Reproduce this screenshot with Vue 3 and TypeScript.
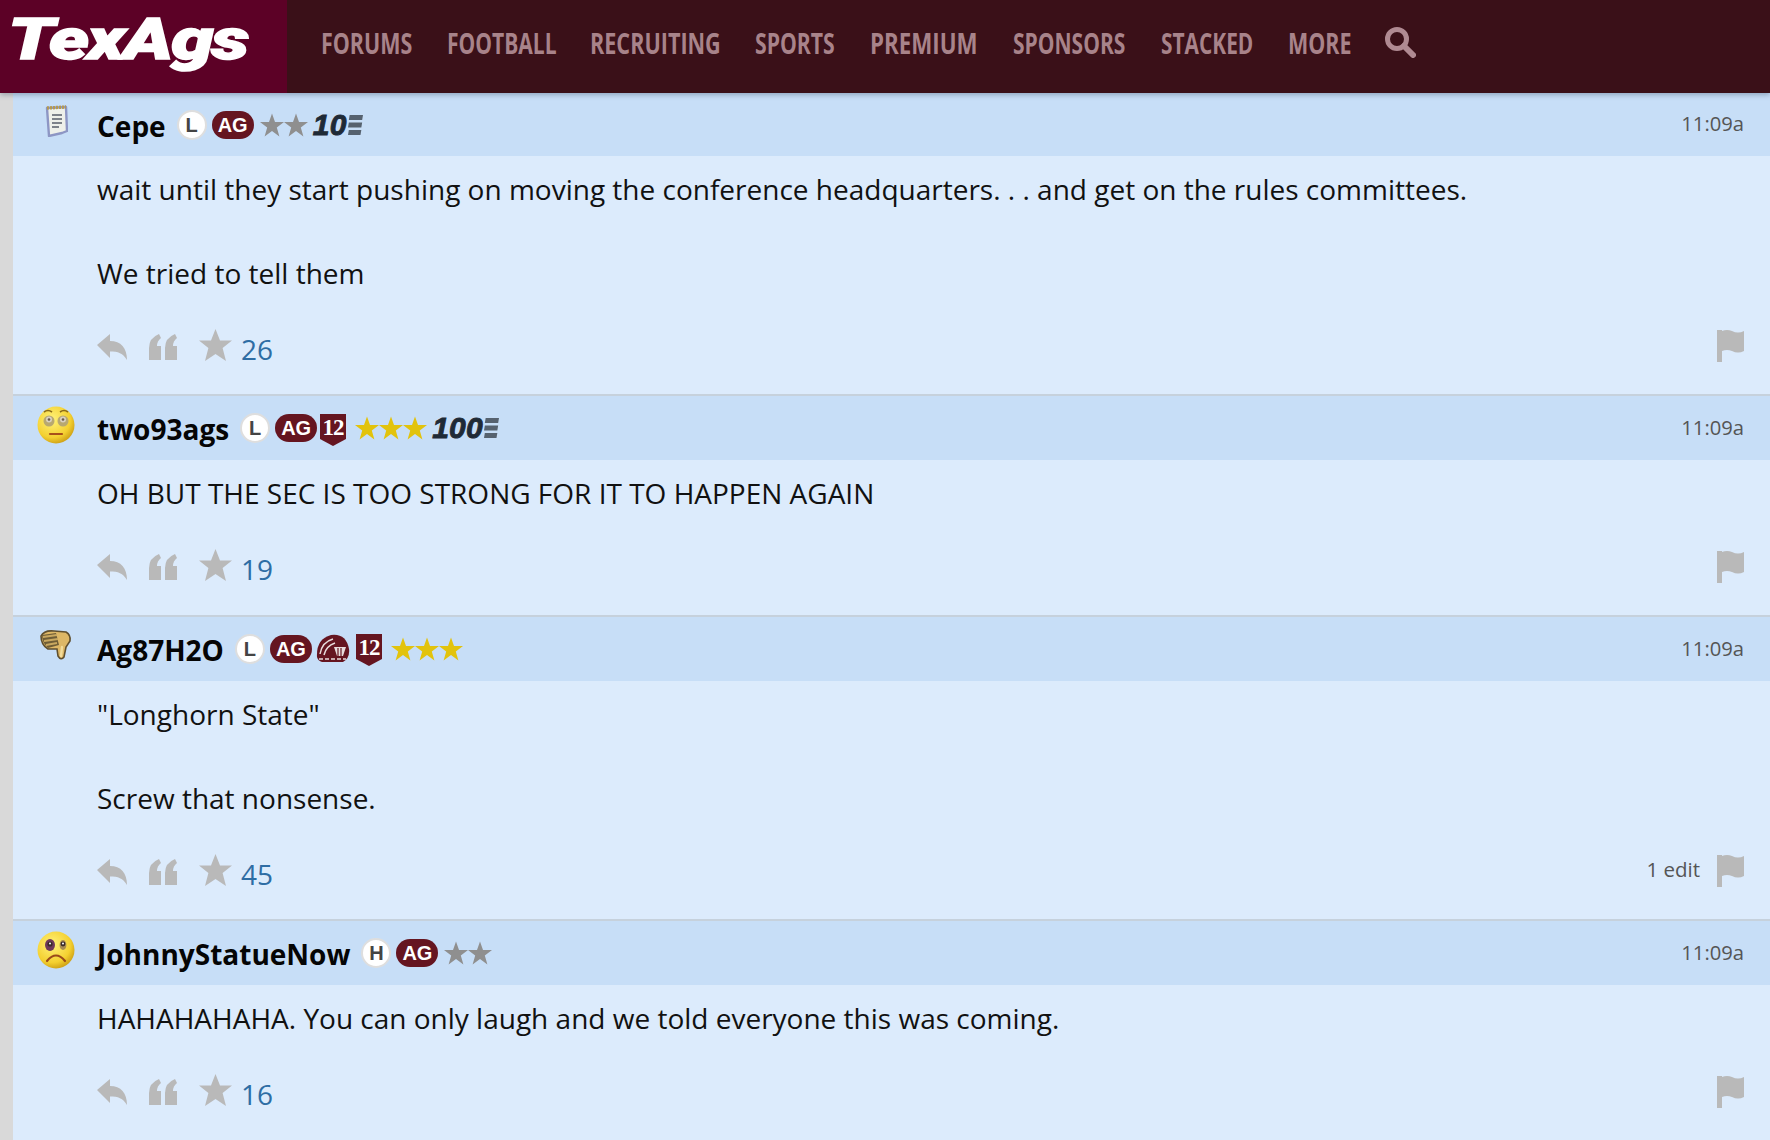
<script setup lang="ts">
interface Post {
  id: number
  avatar: 'note' | 'roll' | 'thumb' | 'sad'
  name: string
  level: string
  stars: number
  starColor: string
  tier: string
  shield: boolean
  helmet: boolean
  lines: string[]
  count: number
  edit: string
}
const nav = [
  { label: 'FORUMS', w: 92, sx: 0.74 },
  { label: 'FOOTBALL', w: 109, sx: 0.725 },
  { label: 'RECRUITING', w: 131, sx: 0.745 },
  { label: 'SPORTS', w: 81, sx: 0.73 },
  { label: 'PREMIUM', w: 109, sx: 0.77 },
  { label: 'SPONSORS', w: 114, sx: 0.725 },
  { label: 'STACKED', w: 93, sx: 0.72 },
  { label: 'MORE', w: 63, sx: 0.74 },
]
const posts: Post[] = [
  { id: 1, avatar: 'note', name: 'Cepe', level: 'L', stars: 2, starColor: '#8f8f8f', tier: '10', shield: false, helmet: false,
    lines: ['wait until they start pushing on moving the conference headquarters. . . and get on the rules committees.', '', 'We tried to tell them'], count: 26, edit: '' },
  { id: 2, avatar: 'roll', name: 'two93ags', level: 'L', stars: 3, starColor: '#e2c30c', tier: '100', shield: true, helmet: false,
    lines: ['OH BUT THE SEC IS TOO STRONG FOR IT TO HAPPEN AGAIN'], count: 19, edit: '' },
  { id: 3, avatar: 'thumb', name: 'Ag87H2O', level: 'L', stars: 3, starColor: '#e2c30c', tier: '', shield: true, helmet: true,
    lines: ['"Longhorn State"', '', 'Screw that nonsense.'], count: 45, edit: '1 edit' },
  { id: 4, avatar: 'sad', name: 'JohnnyStatueNow', level: 'H', stars: 2, starColor: '#8f8f8f', tier: '', shield: false, helmet: false,
    lines: ['HAHAHAHAHA. You can only laugh and we told everyone this was coming.'], count: 16, edit: '' },
]
</script>

<template>
  <div class="page">
    <header class="top">
      <div class="logo"><span class="logo-text">TexAgs</span></div>
      <nav class="nav">
        <a v-for="item in nav" :key="item.label" class="nav-item" :style="{ width: item.w + 'px' }"><span :style="{ transform: `scaleX(${item.sx})` }">{{ item.label }}</span></a>
        <svg class="search" viewBox="0 0 32 32" width="32" height="32">
          <circle cx="13" cy="13" r="9.5" fill="none" stroke="#b08a92" stroke-width="5" />
          <path d="M20 20 L29 29" stroke="#b08a92" stroke-width="6" stroke-linecap="round" />
        </svg>
      </nav>
    </header>

    <main class="list">
      <article v-for="post in posts" :key="post.id" class="post">
        <div class="head">
          <div class="avatar">
            <svg v-if="post.avatar === 'note'" viewBox="0 0 24 32" width="24" height="32">
              <path d="M3 3 L22 2 L23 26 L18 28 L5 31 Z" fill="#eef0ea" stroke="#8d96c4" stroke-width="2.4" stroke-linejoin="round" />
              <path d="M3 3 L22 2" stroke="#b59a50" stroke-width="3.4" stroke-dasharray="2 1" />
              <path d="M8 10 H18 M8 14 H18 M8 18 H18 M8 22 H15" stroke="#7d828a" stroke-width="2.2" />
            </svg>
            <svg v-else-if="post.avatar === 'roll'" viewBox="0 0 38 38" width="38" height="38">
              <defs><radialGradient id="f1" cx=".4" cy=".35" r=".7"><stop offset="0" stop-color="#fff27a" /><stop offset=".7" stop-color="#f4d030" /><stop offset="1" stop-color="#c99a12" /></radialGradient></defs>
              <circle cx="19" cy="19" r="18.5" fill="url(#f1)" />
              <path d="M7 6 Q11 3 15 6 M23 6 Q27 3 31 6" stroke="#8a6a1a" stroke-width="1.6" fill="none" />
              <ellipse cx="12" cy="15" rx="5.5" ry="5.5" fill="#b8a870" />
              <ellipse cx="26" cy="15" rx="5.5" ry="5.5" fill="#b8a870" />
              <circle cx="12" cy="13.5" r="3" fill="#d8d0c0" />
              <circle cx="26" cy="13.5" r="3" fill="#d8d0c0" />
              <circle cx="12" cy="13.5" r="1.3" fill="#6a5a4a" />
              <circle cx="26" cy="13.5" r="1.3" fill="#6a5a4a" />
              <path d="M13 28 H25" stroke="#a8501a" stroke-width="2.2" stroke-linecap="round" />
            </svg>
            <svg v-else-if="post.avatar === 'thumb'" viewBox="0 0 32 32" width="32" height="32">
              <path d="M1 7 Q4 1 14 2 L26 3 Q31 6 30 12 L26 18 L24 28 Q21 32 18 27 L17 20 L8 20 Q1 16 1 7 Z" fill="#ddb766" stroke="#5f4f2f" stroke-width="1.6" />
              <path d="M2 6 L16 4 L19 16 L8 19 Q2 14 2 6 Z" fill="#6f5d36" />
              <path d="M3 8 L17 6 M4 12 L18 10 M6 16 L17 14" stroke="#c9a860" stroke-width="1.8" />
              <path d="M22 18 L21 27" stroke="#f3dc9a" stroke-width="2.4" stroke-linecap="round" />
            </svg>
            <svg v-else viewBox="0 0 38 38" width="38" height="38">
              <defs><radialGradient id="f2" cx=".4" cy=".35" r=".7"><stop offset="0" stop-color="#fff27a" /><stop offset=".7" stop-color="#f4d030" /><stop offset="1" stop-color="#c99a12" /></radialGradient></defs>
              <circle cx="19" cy="19" r="18.5" fill="url(#f2)" />
              <ellipse cx="13" cy="14" rx="5" ry="6" fill="#6e3a5a" />
              <circle cx="13" cy="13" r="2.6" fill="#3a2a2a" />
              <circle cx="13" cy="12.4" r="1" fill="#fff" />
              <ellipse cx="26" cy="14" rx="3.4" ry="5" fill="#a88a50" />
              <circle cx="26" cy="13" r="2.4" fill="#3a2a2a" />
              <circle cx="26" cy="12.4" r="1" fill="#fff" />
              <path d="M10 30 Q19 19 28 30" stroke="#9a4a1a" stroke-width="2.2" fill="none" stroke-linecap="round" />
            </svg>
          </div>
          <span class="name">{{ post.name }}</span>
          <span class="level">{{ post.level }}</span>
          <span class="ag">AG</span>
          <svg v-if="post.helmet" class="helmet" viewBox="0 0 34 30" width="34" height="30">
            <path d="M1 23 Q0 5 15 1 Q30 -1 33 15 Q34 24 27 28 L6 28 Q2 27 1 23 Z" fill="#651520" />
            <path d="M4 20 Q6 8 17 5 M8 21 Q10 12 19 9" stroke="#e8dcdc" stroke-width="1.5" fill="none" />
            <path d="M18 13 H30 L27 22 H21 Z" fill="#e8dcdc" />
            <path d="M22 14 V22 M25 14 V22" stroke="#651520" stroke-width="1.2" />
            <path d="M3 25 H30" stroke="#e8dcdc" stroke-width="1.5" stroke-dasharray="4 2" />
          </svg>
          <svg v-if="post.shield" class="shield" viewBox="0 0 26 32" width="26" height="32">
            <path d="M0 0 H26 V25 L13 32 L0 25 Z" fill="#651520" />
            <text x="13" y="21" text-anchor="middle" class="shield-text">12</text>
          </svg>
          <span class="stars" :class="{ 'stars-after-pill': !post.shield }">
            <svg v-for="n in post.stars" :key="n" viewBox="0 0 24 24" width="24" height="24">
              <path d="M12 0.5 L15 9 H24 L16.8 14.4 L19.4 23.5 L12 18 L4.6 23.5 L7.2 14.4 L0 9 H9 Z" :fill="post.starColor" />
            </svg>
          </span>
          <span v-if="post.tier" class="tier">
            <span class="tier-num">{{ post.tier }}</span>
            <svg viewBox="0 0 18 22" width="15" height="22" preserveAspectRatio="none">
              <path d="M2 1 H18 L17 6 H1 Z M1 8.5 H17 L16 13.5 H0 Z M1 16 H16 L15 21 H0 Z" fill="#56626f" />
            </svg>
          </span>
          <span class="time">11:09a</span>
        </div>
        <div class="body">
          <div class="text">
            <p v-for="(line, i) in post.lines" :key="i" class="line">{{ line }}</p>
          </div>
          <div class="actions">
            <svg class="act reply" viewBox="0 0 30 26" width="30" height="26">
              <path d="M0 11 L13 0 V7 C24 7 30 14 30 26 C26 19 21 17.5 13 17.5 V24 Z" fill="#b9b9b9" />
            </svg>
            <svg class="act quote" viewBox="0 0 28 26" width="28" height="26">
              <path d="M0 26 V14 Q0 4 10 0 L12 4 Q8 7 8 12 H12 V26 Z M16 26 V14 Q16 4 26 0 L28 4 Q24 7 24 12 H28 V26 Z" fill="#b9b9b9" />
            </svg>
            <svg class="act star" viewBox="0 0 33 32" width="33" height="32">
              <path d="M16.5 0 L21 11.5 H33 L23.6 19 L27 32 L16.5 25 L6 32 L9.4 19 L0 11.5 H12 Z" fill="#b9b9b9" />
            </svg>
            <span class="count">{{ post.count }}</span>
            <span v-if="post.edit" class="edit">{{ post.edit }}</span>
            <svg class="flag" :class="{ pushed: !post.edit }" viewBox="0 0 27 32" width="27" height="32">
              <path d="M0 0 H5 V1 Q10 -1 15 1 Q21 4 27 1 V21 Q21 24 15 21 Q10 19 5 21 V32 H0 Z" fill="#b9b9b9" />
            </svg>
          </div>
        </div>
      </article>
    </main>
  </div>
</template>

<style>
html, body { margin: 0; background: #d9d9d9; }
</style>

<style scoped>
.page { width: 1770px; height: 1140px; overflow: hidden; background: #d9d9d9; font-family: "Open Sans", "Liberation Sans", sans-serif; }
.top { height: 93px; display: flex; background: #3a1018; position: relative; z-index: 2; box-shadow: 0 2px 5px rgba(40, 60, 90, .35); }
.logo { width: 287px; background: #5c0126; overflow: hidden; display: flex; align-items: center; }
.logo-text { display: inline-block; padding-left: 6px; color: #fff; font: italic 900 57px/1 Roboto, "Liberation Sans", sans-serif; -webkit-text-stroke: 1.5px #fff; letter-spacing: -1.5px; transform: scaleX(1.33) translateY(-7px); transform-origin: left center; white-space: nowrap; }
.nav { display: flex; align-items: center; gap: 34px; padding-left: 34px; margin-top: -9px; }
.nav-item { display: block; white-space: nowrap; color: #a8838a; font-weight: 700; font-size: 29px; line-height: 1; }
.nav-item span { display: inline-block; transform-origin: left center; }
.search { margin-left: -1px; }
.list { margin-left: 13px; }
.post { background: #dcebfc; border-bottom: 2px solid #c6d1dc; }
.post:first-child .head { height: 63px; }
.head { height: 64px; background: #c7def7; display: flex; align-items: center; padding-right: 26px; }
.avatar { box-sizing: border-box; width: 84px; height: 44px; display: flex; align-items: center; justify-content: center; margin-top: -7px; flex: none; padding-left: 2px; }
.name { color: #050505; font-weight: 700; font-size: 28px; line-height: 1; margin-right: 11px; margin-top: 2px; }
.level { box-sizing: border-box; width: 30px; height: 30px; border-radius: 50%; background: #fff; border: 2px solid #dedede; color: #444; font: 700 20px/26px "Liberation Sans", sans-serif; text-align: center; margin-right: 5px; flex: none; }
.ag { width: 42px; height: 28px; border-radius: 14px; background: #651520; color: #fff; font: 700 20px/28px "Liberation Sans", sans-serif; text-align: center; flex: none; }
.helmet { margin-left: 4px; margin-right: 3px; margin-top: 1px; }
.shield { margin-left: 3px; margin-top: 3px; }
.shield-text { fill: #fff; font: 700 23px "Liberation Serif", serif; letter-spacing: -1px; }
.stars { display: flex; margin-left: 9px; }
.stars-after-pill { margin-left: 6px; }
.tier { display: flex; align-items: center; margin-left: 5px; gap: 1px; }
.tier-num { color: #1f2a36; font: italic 700 30px/1 "Liberation Sans", sans-serif; letter-spacing: .3px; -webkit-text-stroke: .9px #1f2a36; }
.time { margin-left: auto; margin-top: -2px; color: #555; font-size: 20.2px; line-height: 1; }
.body { padding: 11.9px 26px 0 84px; }
.line { margin: 0; min-height: 42px; font-size: 28px; line-height: 42px; color: #111; }
.actions { height: 100.6px; display: flex; align-items: center; padding-top: 5px; box-sizing: border-box; }
.act { flex: none; }
.quote { margin-left: 22px; }
.star { margin-left: 22px; margin-top: -4px; }
.count { margin-left: 9px; color: #2e6da4; font-size: 28px; line-height: 1; margin-top: 4px; }
.edit { margin-left: auto; margin-right: 17px; margin-top: -4px; color: #555; font-size: 20.5px; line-height: 1; }
.flag { margin-top: -1px; }
.flag.pushed { margin-left: auto; }
</style>
